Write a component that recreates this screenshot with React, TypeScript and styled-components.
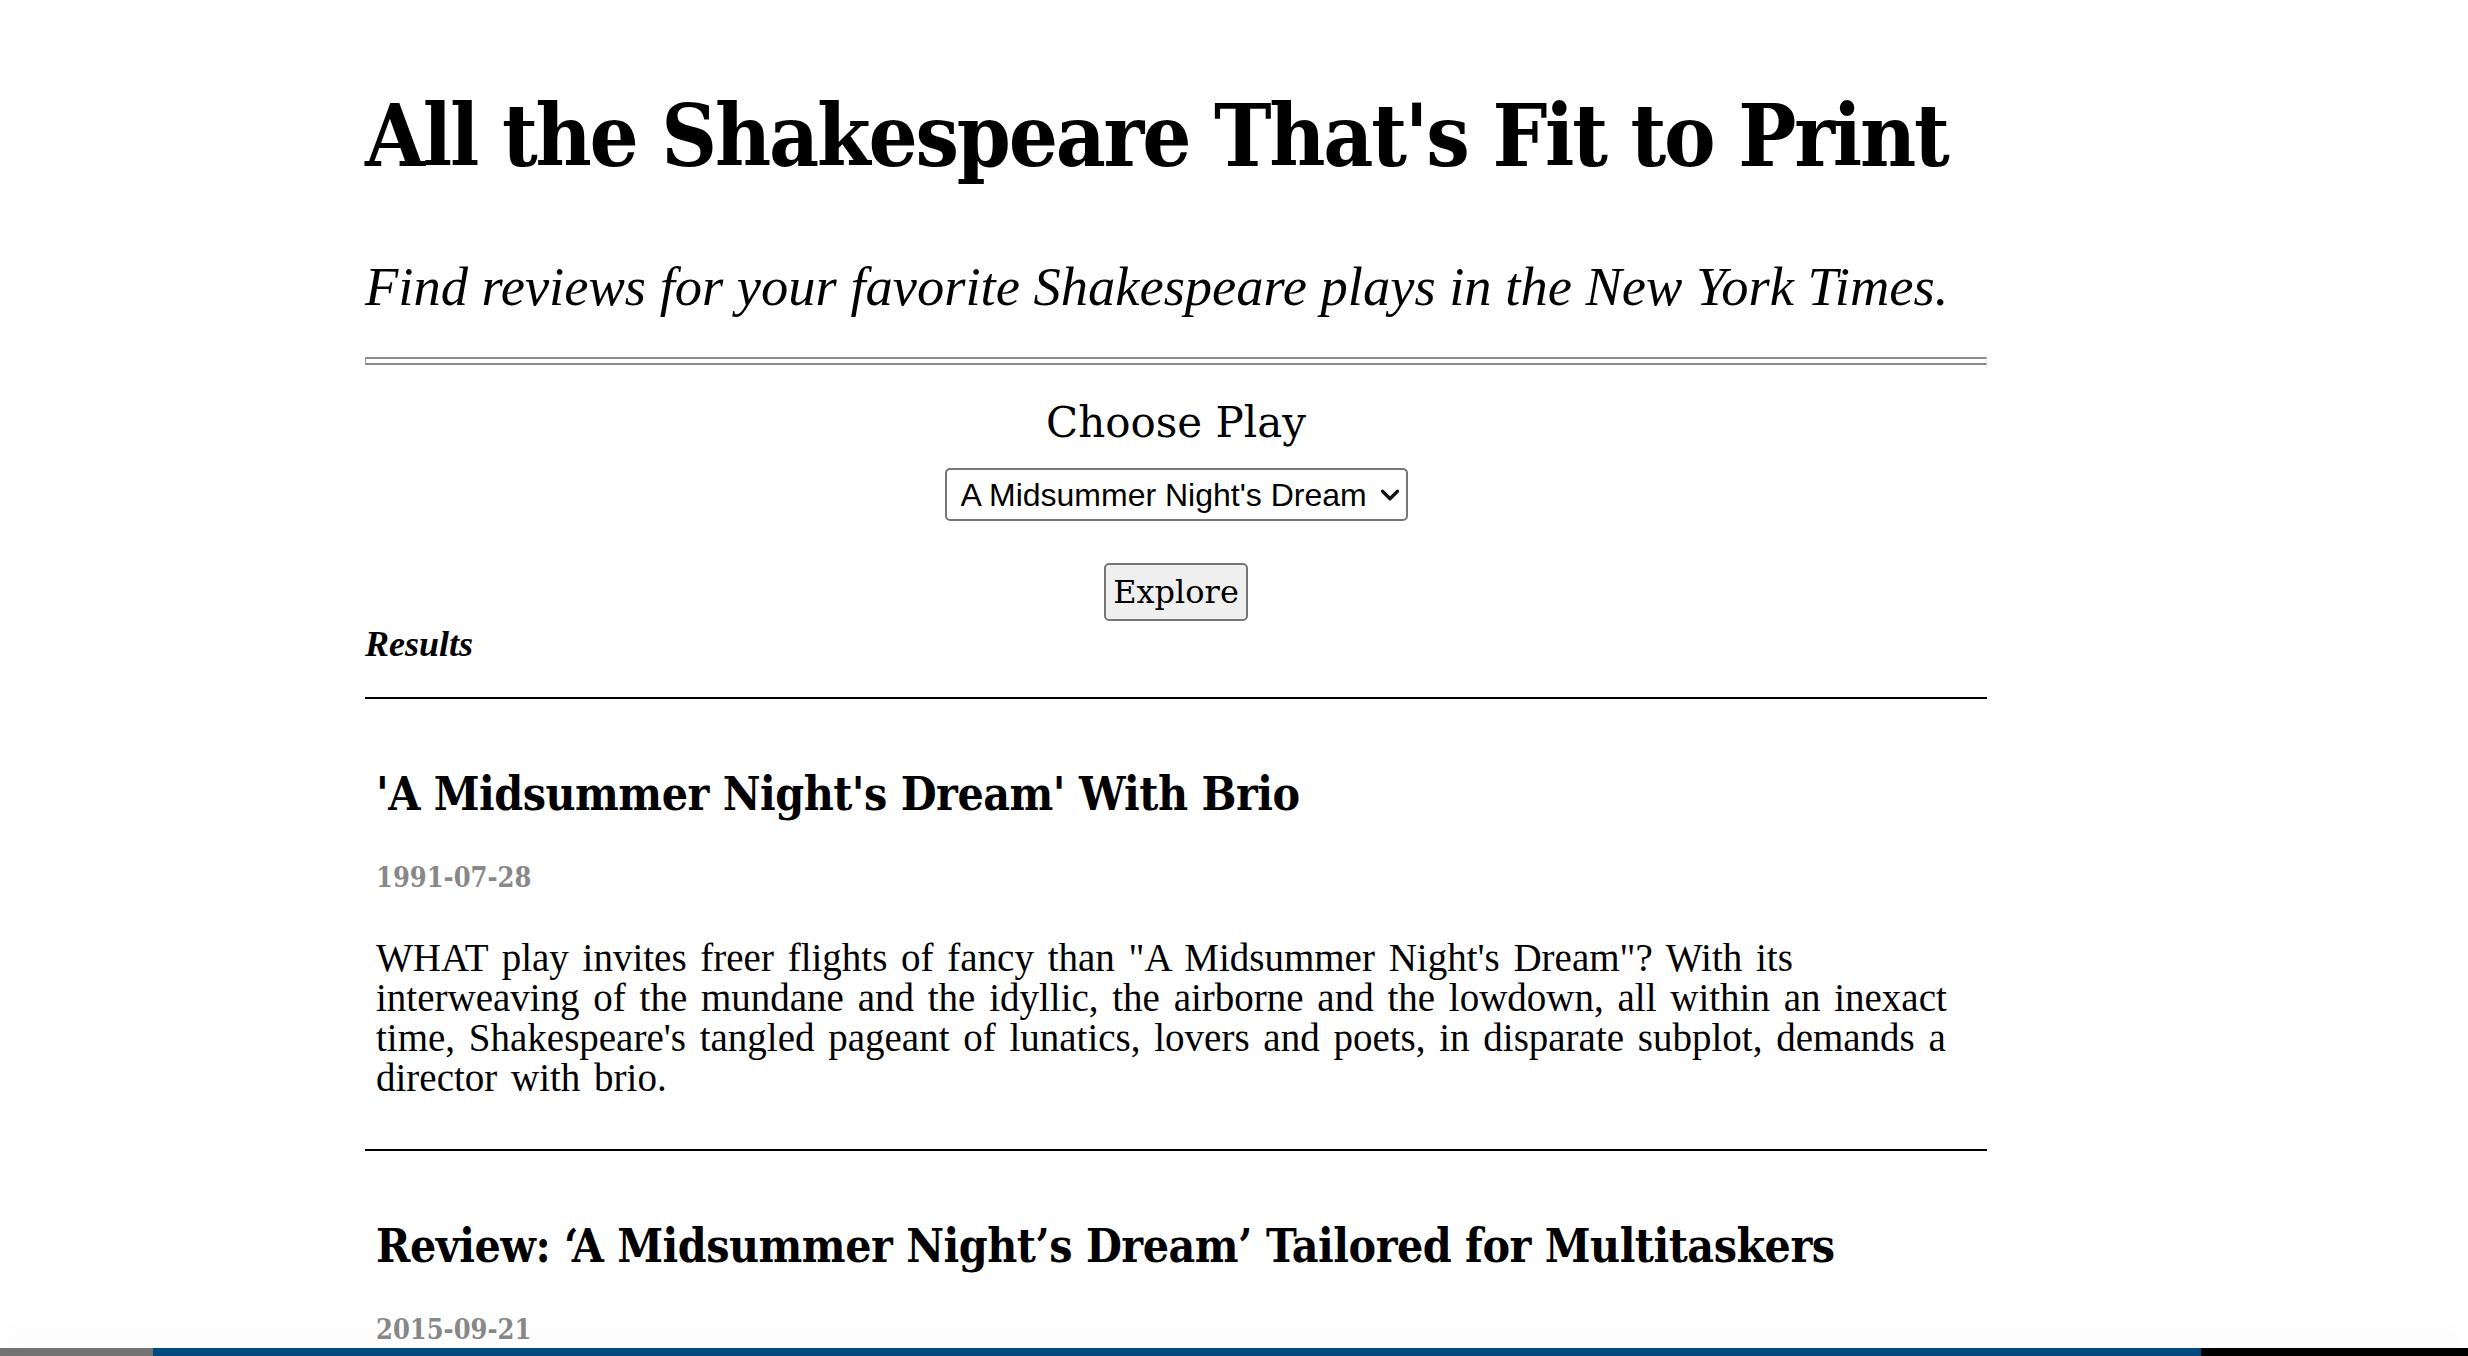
import React, { useState } from "react";
import styled, { createGlobalStyle } from "styled-components";
import { ChevronDown } from "lucide-react";

const plays = [
  "All's Well That Ends Well",
  "Antony and Cleopatra",
  "As You Like It",
  "Coriolanus",
  "Hamlet",
  "Julius Caesar",
  "King Lear",
  "Macbeth",
  "Measure for Measure",
  "A Midsummer Night's Dream",
  "Much Ado About Nothing",
  "Othello",
  "Romeo and Juliet",
  "The Merchant of Venice",
  "The Taming of the Shrew",
  "The Tempest",
  "Twelfth Night",
];

interface iReview {
  headline: string;
  date: string;
  snippet?: string;
}

const reviews: iReview[] = [
  {
    headline: "'A Midsummer Night's Dream' With Brio",
    date: "1991-07-28",
    snippet:
      "WHAT play invites freer flights of fancy than \"A Midsummer Night's Dream\"? With its interweaving of the mundane and the idyllic, the airborne and the lowdown, all within an inexact time, Shakespeare's tangled pageant of lunatics, lovers and poets, in disparate subplot, demands a director with brio.",
  },
  {
    headline: "Review: \u2018A Midsummer Night\u2019s Dream\u2019 Tailored for Multitaskers",
    date: "2015-09-21",
  },
];

const App: React.FC = () => {
  const [play, setPlay] = useState("A Midsummer Night's Dream");

  return (
    <>
      <GlobalStyle />
      <Page>
        <Title>All the Shakespeare That's Fit to Print</Title>
        <Subtitle>
          Find reviews for your favorite Shakespeare plays in the New York Times.
        </Subtitle>
        <DoubleRule />
        <Form onSubmit={(e) => e.preventDefault()}>
          <Label htmlFor="play">Choose Play</Label>
          <SelectBox>
            <Select id="play" value={play} onChange={(e) => setPlay(e.target.value)}>
              {plays.map((p) => (
                <option key={p} value={p}>
                  {p}
                </option>
              ))}
            </Select>
            <ChevronDown size={30} strokeWidth={2.6} color="#111" />
          </SelectBox>
          <ExploreButton type="submit">Explore</ExploreButton>
        </Form>
        <ResultsHeading>Results</ResultsHeading>
        <ResultsRule />
        {reviews.map((r) => (
          <Review key={r.headline}>
            <Headline>{r.headline}</Headline>
            <PubDate>{r.date}</PubDate>
            {r.snippet && <Snippet>{r.snippet}</Snippet>}
          </Review>
        ))}
      </Page>
      <Taskbar>
        <TaskSeg bg="#737373" w="153px" />
        <TaskSeg bg="#004a7f" w="2048px" />
        <TaskSeg bg="#000" w="auto" />
      </Taskbar>
    </>
  );
};
export default App;

const GlobalStyle = createGlobalStyle`
  html, body {
    margin: 0;
    padding: 0;
    background: #fff;
  }
  body {
    font-family: "Liberation Serif", serif;
    color: #000;
  }
`;

const Page = styled.div`
  display: flex;
  flex-direction: column;
  width: 1622px;
  margin-left: 365px;
  padding-top: 86px;
  padding-bottom: 200px;
`;

const Title = styled.h1`
  margin: 0;
  font-family: "DejaVu Serif Condensed", "Liberation Serif", serif;
  font-stretch: condensed;
  font-weight: bold;
  font-size: 86px;
  letter-spacing: -2.2px;
  line-height: 100px;
  white-space: nowrap;
`;

const Subtitle = styled.h2`
  margin: 71px 0 0;
  font-family: "Liberation Serif", serif;
  font-style: italic;
  font-weight: normal;
  font-size: 54.5px;
  line-height: 60px;
  white-space: nowrap;
`;

const DoubleRule = styled.hr`
  margin: 40px 0 0;
  height: 4px;
  border: none;
  border-top: 2px solid #8a8a8a;
  border-bottom: 2px solid #8a8a8a;
  border-left: 1px solid #9a9a9a;
  border-right: 1px solid #e6e6e6;
`;

const Form = styled.form`
  display: flex;
  flex-direction: column;
  align-items: center;
`;

const Label = styled.label`
  margin-top: 33px;
  font-family: "DejaVu Serif", serif;
  font-size: 42px;
  line-height: 50px;
`;

const SelectBox = styled.div`
  display: flex;
  align-items: center;
  box-sizing: border-box;
  width: 463px;
  height: 53px;
  margin-top: 20px;
  padding: 0 1px 0 14px;
  border: 2px solid #767676;
  border-radius: 5px;
  background: #fff;
`;

const Select = styled.select`
  flex: 1;
  appearance: none;
  border: none;
  outline: none;
  background: transparent;
  padding: 0;
  margin: 0;
  font-family: "Liberation Sans", Arial, sans-serif;
  font-size: 32px;
  color: #000;
`;

const ExploreButton = styled.button`
  margin-top: 42px;
  height: 58px;
  padding: 0 7px;
  border: 2px solid #767676;
  border-radius: 5px;
  background: #efefef;
  color: #000;
  font-family: "DejaVu Serif", serif;
  font-size: 32px;
  line-height: 1;
`;

const ResultsHeading = styled.h3`
  margin: 3px 0 0;
  font-family: "Liberation Serif", serif;
  font-style: italic;
  font-weight: bold;
  font-size: 36px;
  line-height: 40px;
`;

const ResultsRule = styled.div`
  margin-top: 33px;
  height: 2px;
  background: #000;
`;

const Review = styled.article`
  display: flex;
  flex-direction: column;
  padding: 0 11px 51px;
  border-bottom: 2px solid #000;
`;

const Headline = styled.h2`
  margin: 67px 0 0;
  font-family: "DejaVu Serif Condensed", "Liberation Serif", serif;
  font-stretch: condensed;
  font-weight: bold;
  font-size: 46px;
  letter-spacing: -0.5px;
  line-height: 56px;
`;

const PubDate = styled.h4`
  margin: 40px 0 0;
  font-family: "DejaVu Serif Condensed", "Liberation Serif", serif;
  font-stretch: condensed;
  font-weight: bold;
  font-size: 27px;
  line-height: 32px;
  color: #888;
`;

const Snippet = styled.p`
  margin: 44px 0 0;
  max-width: 1592px;
  font-family: "Liberation Serif", serif;
  font-size: 39px;
  word-spacing: 4px;
  line-height: 40px;
`;

const Taskbar = styled.div`
  position: fixed;
  left: 0;
  right: 0;
  bottom: 0;
  height: 8px;
  display: flex;
  box-shadow: 0 -14px 22px rgba(0, 0, 0, 0.035);
`;

const TaskSeg = styled.div<{ bg: string; w: string }>`
  flex: ${(props) => (props.w === "auto" ? "1" : `0 0 ${props.w}`)};
  background: ${(props) => props.bg};
`;
